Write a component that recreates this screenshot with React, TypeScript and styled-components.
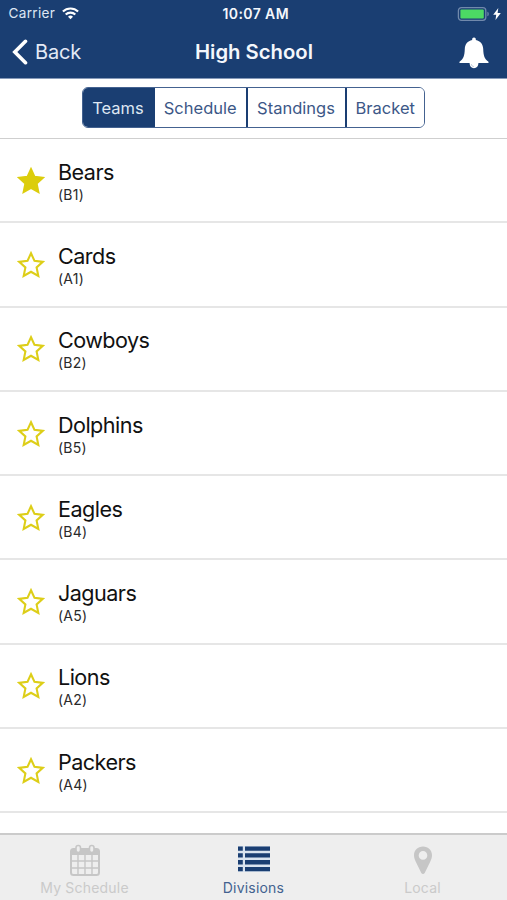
import React from 'react';
import styled, { createGlobalStyle } from 'styled-components';

const NAVY = '#1a3e72';
const MUTED = '#c6c6c6';

const GlobalStyle = createGlobalStyle`
  * { box-sizing: border-box; }
  body { margin: 0; background: #fff; overflow: hidden; }
`;

const Screen = styled.div`
  width: 507px;
  height: 900px;
  display: flex;
  flex-direction: column;
  overflow: hidden;
  background: #fff;
  color: #111;
  font-family: Inter, 'Liberation Sans', sans-serif;
`;

const Header = styled.header`
  height: 79px;
  flex: none;
  background: ${NAVY};
  border-bottom: 1px solid #8699b8;
  color: #f4f7fc;
`;

const StatusBar = styled.div`
  height: 27px;
  display: grid;
  grid-template-columns: 1fr auto 1fr;
  align-items: center;
  padding: 0 6px 0 8.5px;
  font-size: 13.6px;
  line-height: 27px;
`;

const Carrier = styled.div`
  display: flex;
  align-items: center;
  gap: 7px;
  color: #dde6f4;
  letter-spacing: 0.3px;
`;

const Clock = styled.div`
  font-weight: 600;
  font-size: 14px;
  letter-spacing: 0.4px;
  padding-left: 2px;
`;

const Power = styled.div`
  display: flex;
  justify-content: flex-end;
  align-items: center;
  gap: 4px;
`;

const NavBar = styled.div`
  height: 50px;
  display: grid;
  grid-template-columns: 1fr auto 1fr;
  align-items: center;
  padding: 0 18px 0 12px;
`;

const BackButton = styled.div`
  display: flex;
  align-items: center;
  gap: 7px;
  font-size: 20px;
  line-height: 24px;
  letter-spacing: -0.2px;
  color: #e3eaf6;
`;

const Title = styled.h1`
  margin: 0;
  padding-left: 7px;
  font-size: 20.3px;
  line-height: 24px;
  font-weight: 600;
  letter-spacing: 0;
`;

const BellButton = styled.div`
  display: flex;
  justify-content: flex-end;
  padding-top: 1px;
`;

const FilterBar = styled.div`
  height: 60px;
  flex: none;
  display: flex;
  justify-content: center;
  padding-top: 8px;
  border-bottom: 1.5px solid #cfcfcf;
`;

const Segments = styled.div`
  display: flex;
  width: 343px;
  height: 41px;
  border: 1px solid #446290;
  border-radius: 6px;
  overflow: hidden;
`;

const Segment = styled.div<{ $width: number; $active?: boolean }>`
  width: ${p => p.$width}px;
  flex: none;
  display: flex;
  align-items: center;
  justify-content: center;
  font-size: 16.5px;
  letter-spacing: 0.02px;
  color: ${p => (p.$active ? '#dfe7f3' : '#3c5787')};
  background: ${p => (p.$active ? NAVY : '#fff')};
  & + & { border-left: 2px solid ${NAVY}; }
`;

const TeamList = styled.main`
  flex: 1;
  min-height: 0;
  overflow: hidden;
`;

const TeamRow = styled.div`
  height: 84.3px;
  display: flex;
  align-items: center;
  gap: 13px;
  padding-left: 17px;
  border-bottom: 2px solid #e6e6e6;
`;

const TeamText = styled.div`
  display: flex;
  flex-direction: column;
  gap: 1px;
  padding-top: 2px;
`;

const TeamName = styled.div`
  font-size: 21.6px;
  line-height: 26px;
  letter-spacing: -0.55px;
`;

const TeamCode = styled.div`
  font-size: 14px;
  line-height: 18px;
  letter-spacing: 0.25px;
  color: #2a2a2a;
`;

const TabBar = styled.nav`
  height: 67px;
  flex: none;
  display: grid;
  grid-template-columns: repeat(3, 1fr);
  background: #eee;
  border-top: 2px solid #cbcbcb;
`;

const Tab = styled.div<{ $active?: boolean }>`
  display: flex;
  flex-direction: column;
  align-items: center;
  padding-top: 8px;
  gap: 2px;
  color: ${p => (p.$active ? NAVY : MUTED)};
`;

const TabLabel = styled.span<{ $active?: boolean }>`
  font-size: 14px;
  line-height: 18px;
  letter-spacing: 0.2px;
  color: ${p => (p.$active ? '#42628f' : '#cacaca')};
`;

const WifiIcon = () => (
  <svg width="17" height="13" viewBox="0 0 17 13" fill="none" stroke="#fff" strokeWidth="2.1">
    <path d="M.9 4.6a10.8 10.8 0 0 1 15.2 0" />
    <path d="M3.7 7.6a6.8 6.8 0 0 1 9.6 0" />
    <path d="M8.5 12.3 6 9.8a3.6 3.6 0 0 1 5 0z" fill="#fff" stroke="none" />
  </svg>
);

const BatteryIcon = () => (
  <svg width="32" height="14" viewBox="0 0 32 14">
    <rect x="1.4" y=".7" width="27.4" height="12.6" rx="3" fill="none" stroke="#7189ac" strokeWidth="1.3" />
    <rect x="3.4" y="2.6" width="23.4" height="8.8" rx="1" fill="#4cd964" />
    <path d="M30.4 4.7c1.8.5 1.8 4.1 0 4.6z" fill="#7189ac" />
  </svg>
);

const BoltIcon = () => (
  <svg width="8" height="12" viewBox="0 0 8 12">
    <path d="M5.3 0 .2 6.8h3L2.5 12l5.3-7.1H4.6z" fill="#fff" />
  </svg>
);

const BackIcon = () => (
  <svg width="16" height="26" viewBox="0 0 16 26" fill="none" stroke="#fff" strokeWidth="3.6" strokeLinecap="round">
    <path d="M13.5 2.3 2.8 13l10.7 10.7" strokeLinejoin="miter" />
  </svg>
);

const BellIcon = () => (
  <svg width="30" height="32" viewBox="0 0 30 32" fill="#fff">
    <path d="M15 .5c1.5 0 2 1 1.8 2.4 4.7 1 7.2 4.2 7.4 8.8.2 7.2 1.5 10.4 5 12.8.7.6.6 1.6-.6 1.6h-9.2c0 3-1.7 5.2-4.4 5.2s-4.4-2.2-4.4-5.2H1.4c-1.2 0-1.3-1-.6-1.6 3.5-2.4 4.8-5.6 5-12.8.2-4.6 2.7-7.8 7.4-8.8C13 1.5 13.5.5 15 .5z" />
    <path d="M12.3 27.2c.2 1.5 1.1 2.2 2.5 2.3" fill="none" stroke="#a8b7cd" strokeWidth=".8" />
  </svg>
);

const StarIcon = ({ filled }: { filled?: boolean }) => (
  <svg width="28" height="29" viewBox="0 -1 28 29">
    <path
      d="M14 2.3 17.5 9.9 25.8 10.9 19.6 16.5 21.3 24.9 14 20.8 6.7 24.9 8.4 16.5 2.2 10.9 10.5 9.9z"
      fill={filled ? '#dccd0c' : 'none'}
      stroke={filled ? '#dccd0c' : '#ddce18'}
      strokeWidth="2.1"
    />
  </svg>
);

const CalendarIcon = () => (
  <svg width="32" height="34" viewBox="0 0 32 34" fill="none" stroke={MUTED}>
    <rect x="2" y="6" width="28" height="26" rx="2.5" strokeWidth="2" />
    <path d="M2 6h28v6H2z" fill={MUTED} stroke="none" />
    <path d="M9 12v20M16 12v20M23 12v20M2 18h28M2 25h28" strokeWidth="1.4" />
    <rect x="7" y="2.5" width="4.5" height="7" rx="2.2" fill="#eee" strokeWidth="1.6" />
    <rect x="20.5" y="2.5" width="4.5" height="7" rx="2.2" fill="#eee" strokeWidth="1.6" />
  </svg>
);

const ListIcon = () => (
  <svg width="32" height="34" viewBox="0 0 32 34">
    <path d="M0 3h32v26H0z" fill="#d9e3ef" />
    <path d="M0 3.5h4.8v4.3H0zM7 3.5h25v4.3H7zM0 10.3h4.8v4.3H0zM7 10.3h25v4.3H7zM0 17.1h4.8v4.3H0zM7 17.1h25v4.3H7zM0 23.9h4.8v4.3H0zM7 23.9h25v4.3H7z" fill={NAVY} />
  </svg>
);

const PinIcon = () => (
  <svg width="20" height="34" viewBox="0 0 20 34">
    <path fillRule="evenodd" d="M10 3.5c5.2 0 9 3.8 9 8.8 0 2.5-.8 4.3-1.9 6.6l-5.4 11c-.7 1.5-2.7 1.5-3.4 0l-5.4-11C1.8 16.6 1 14.8 1 12.3c0-5 3.8-8.8 9-8.8zm0 4.6a4.3 4.3 0 1 0 0 8.6 4.3 4.3 0 0 0 0-8.6z" fill={MUTED} />
  </svg>
);

const teams = [
  { name: 'Bears', code: 'B1', favorite: true },
  { name: 'Cards', code: 'A1' },
  { name: 'Cowboys', code: 'B2' },
  { name: 'Dolphins', code: 'B5' },
  { name: 'Eagles', code: 'B4' },
  { name: 'Jaguars', code: 'A5' },
  { name: 'Lions', code: 'A2' },
  { name: 'Packers', code: 'A4' },
];

export default function App() {
  return (
    <Screen>
      <GlobalStyle />
      <Header>
        <StatusBar>
          <Carrier>Carrier<WifiIcon /></Carrier>
          <Clock>10:07 AM</Clock>
          <Power><BatteryIcon /><BoltIcon /></Power>
        </StatusBar>
        <NavBar>
          <BackButton><BackIcon />Back</BackButton>
          <Title>High School</Title>
          <BellButton><BellIcon /></BellButton>
        </NavBar>
      </Header>
      <FilterBar>
        <Segments>
          <Segment $width={70} $active>Teams</Segment>
          <Segment $width={92.5}>Schedule</Segment>
          <Segment $width={99}>Standings</Segment>
          <Segment $width={79.5}>Bracket</Segment>
        </Segments>
      </FilterBar>
      <TeamList>
        {teams.map(team => (
          <TeamRow key={team.name}>
            <StarIcon filled={team.favorite} />
            <TeamText>
              <TeamName>{team.name}</TeamName>
              <TeamCode>({team.code})</TeamCode>
            </TeamText>
          </TeamRow>
        ))}
      </TeamList>
      <TabBar>
        <Tab><CalendarIcon /><TabLabel>My Schedule</TabLabel></Tab>
        <Tab $active><ListIcon /><TabLabel $active>Divisions</TabLabel></Tab>
        <Tab><PinIcon /><TabLabel>Local</TabLabel></Tab>
      </TabBar>
    </Screen>
  );
}
